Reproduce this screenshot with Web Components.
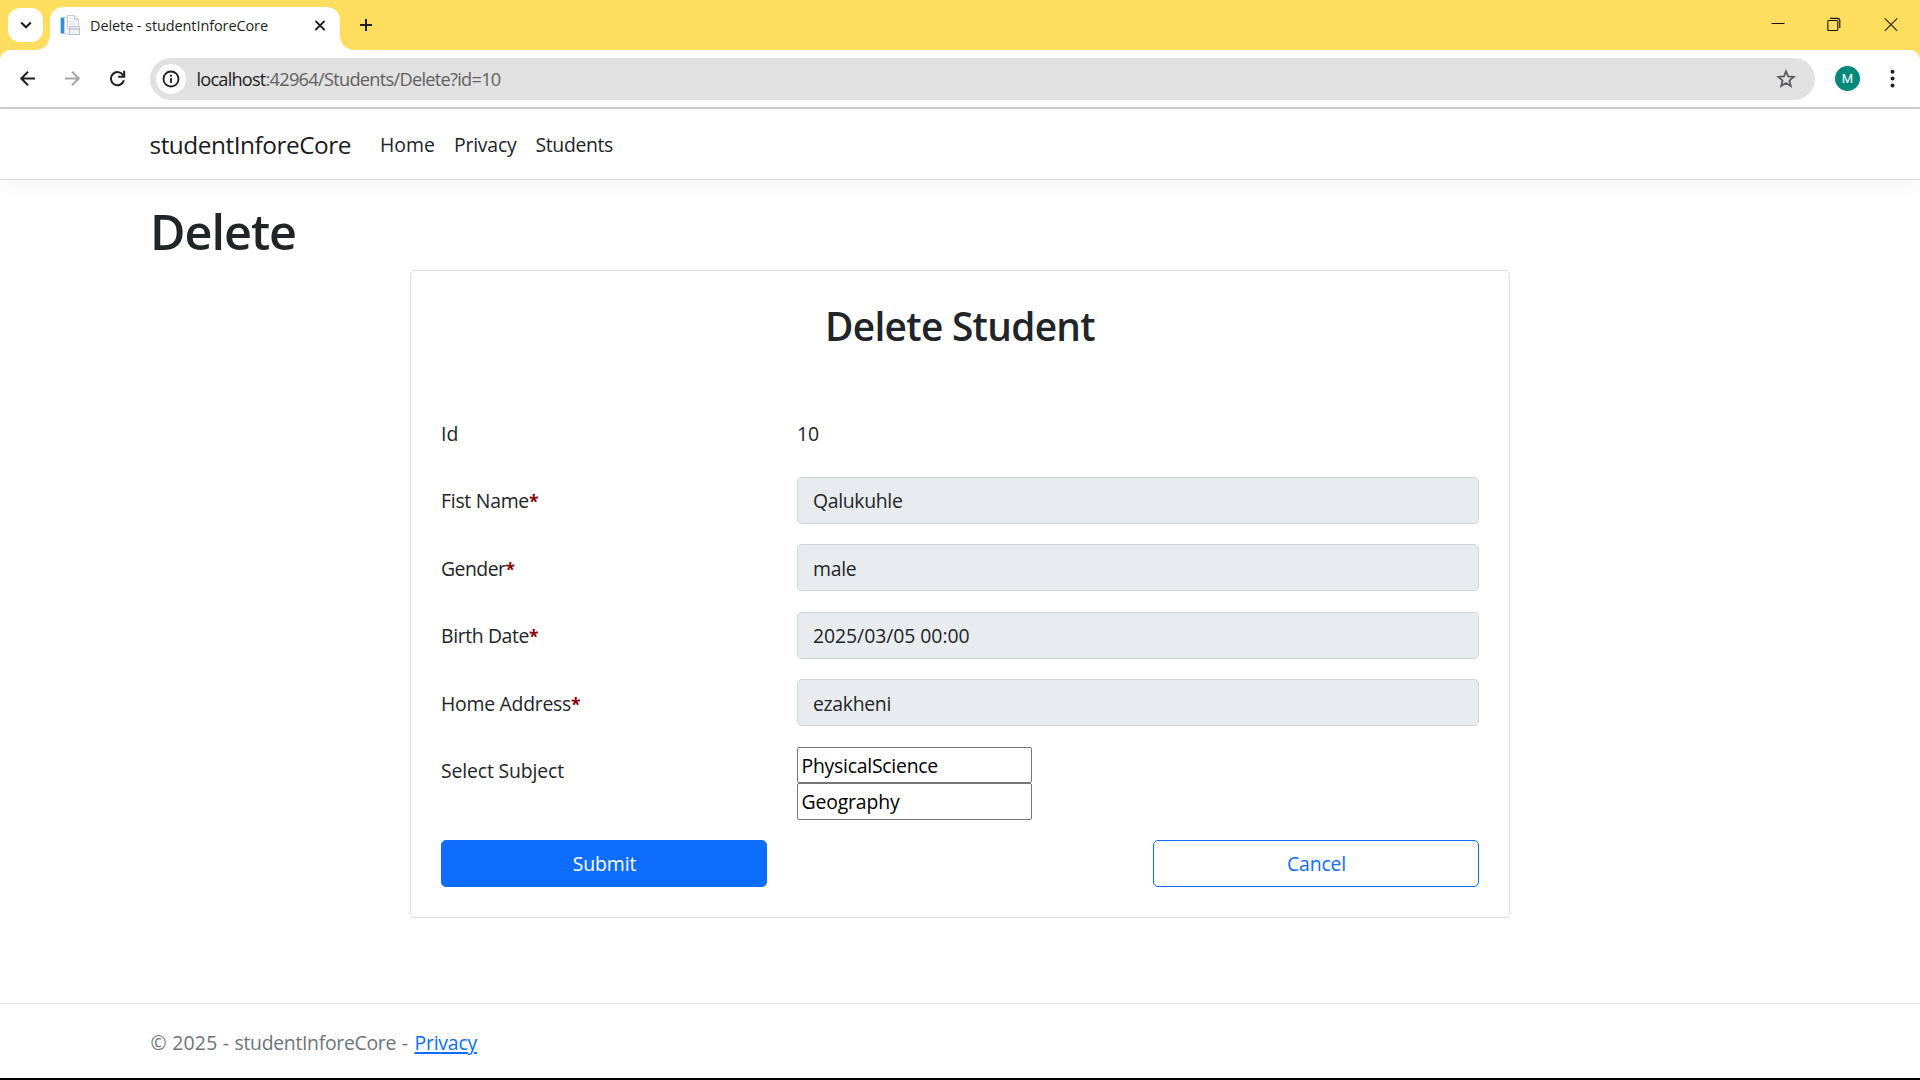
<!DOCTYPE html>
<html lang="en">
<head>
<meta charset="utf-8">
<title>Delete - studentInforeCore</title>
<style>
html,body{margin:0;height:100%;overflow:hidden;background:#fff}
body{font-family:"Open Sans","Noto Sans",sans-serif;font-size:19.4px;line-height:30px;color:#212529}
</style>
</head>
<body>
<browser-window></browser-window>
<script>
const define = (name, html, setup) => customElements.define(name, class extends HTMLElement {
  constructor() {
    super();
    this.attachShadow({mode: 'open'});
    const t = document.createElement('template');
    t.innerHTML = html;
    this.shadowRoot.append(t.content.cloneNode(true));
  }
  connectedCallback() { if (setup) setup.call(this, this.shadowRoot); }
});

// Text run tracked to an exact advance width.
define('fit-text', `<style>:host{display:inline-block;white-space:pre;flex:none}span{display:inline-block}</style><span><slot></slot></span>`, function (root) {
  const s = root.querySelector('span'), w = +this.getAttribute('w');
  s.style.letterSpacing = (w - s.getBoundingClientRect().width) / this.textContent.length + 'px';
  this.style.width = w + 'px';
});

define('tab-strip', `<style>
:host{display:flex;height:50px;background:#ffdd5e;align-items:flex-start}
.menu{width:35px;height:34px;margin:8px 7px 0 8px;border-radius:12px;background:#fff}
.tab{box-sizing:border-box;width:290px;height:43px;margin-top:7px;border-radius:13px 13px 0 0;background:#fff;display:flex;align-items:center;padding:0 12px 7px 10px;font-size:14.5px;line-height:20px;color:#1f1f1f;position:relative}
.tab::before,.tab::after{content:"";position:absolute;bottom:0;width:14px;height:14px}
.tab::before{left:-14px;background:radial-gradient(circle at 0 0,transparent 13.5px,#fff 14px)}
.tab::after{right:-14px;background:radial-gradient(circle at 100% 0,transparent 13.5px,#fff 14px)}
.tab fit-text{margin-left:10px;padding-top:2px}
.x{margin-left:auto}
.plus{margin:17px 0 0 18px}
.controls{margin-left:auto;display:flex;padding:17px 22px 0 0;gap:42px}
.close{margin-left:1.5px}
svg{display:block;flex:none}
</style>
<div class="menu"><svg width="35" height="34" viewBox="0 0 35 34" fill="none" stroke="#1f1f1f" stroke-width="2.2"><path d="M13.2 14.5L18 19.2L22.8 14.5"/></svg></div>
<div class="tab">
<svg width="20" height="21" viewBox="0 0 20 21"><rect x=".5" y="2.5" width="4" height="16" fill="#3292cf"/><path d="M.5 2v17" stroke="#b9d5e6"/><path d="M4.5 2.5h9l4 4V19h-13z" fill="#f7f8fa" stroke="#c9cdd3"/><path d="M7.5 .6h7l4 4v9h-11z" fill="#fafbfc" stroke="#c3c8cf"/><path d="M14.5 .6v4h4" fill="#e8ebef" stroke="#c3c8cf"/><path d="M9 4h4M9 6.5h7M9 9h7" stroke="#d6dde6"/><path d="M9.5 11.5h10v8h-10z" fill="#f0f2f6" stroke="#b9bfc8"/><path d="M10 14h9" stroke="#c6cdd8" stroke-width="2"/></svg>
<fit-text w="178">Delete - studentInforeCore</fit-text>
<svg class="x" width="16" height="16" viewBox="0 0 16 16" stroke="#1f1f1f" stroke-width="1.9"><path d="M3.4 3.8L12.6 13M12.6 3.8L3.4 13"/></svg>
</div>
<svg class="plus" width="16" height="16" viewBox="0 0 16 16" stroke="#1f1f1f" stroke-width="2"><path d="M8 2v12M2 8h12"/></svg>
<div class="controls">
<svg width="14" height="15" viewBox="0 0 14 15" stroke="#111"><path d="M.5 6.5H13.5"/></svg>
<svg width="14" height="15" viewBox="0 0 14 15" fill="none" stroke="#111" stroke-width="1.1"><rect x=".8" y="3.5" width="10" height="10" rx="1"/><path d="M3 1.4h7.5q2.3 0 2.3 2.3V11"/></svg>
<svg class="close" width="14" height="15" viewBox="0 0 14 15" stroke="#222" stroke-width="1.1"><path d="M.8 1.4L13.2 13.8M13.2 1.4L.8 13.8"/></svg>
</div>`);

define('tool-bar', `<style>
:host{display:block;height:57px;background:#ffdd5e;border-bottom:2px solid #ccc}
.bar{height:57px;background:#fff;border-radius:10px 10px 0 0;display:flex;box-sizing:border-box;padding-top:8px}
svg{display:block;flex:none}
.nav{display:flex;width:150px}
.url{width:1665px;height:42px;border-radius:21px;background:#e1e1e1;display:flex;align-items:center;box-sizing:border-box;padding:0 19.5px 0 6px;font-size:18.2px;line-height:26px;color:#5f6063}
.info{width:30px;height:30px;border-radius:50%;background:#fff;margin-right:10.5px}
.host{color:#1f1f1f}
.star{margin-left:auto}
.avatar{width:25px;height:25px;border-radius:50%;background:#00897b;color:#fff;font:13px/25px Roboto,sans-serif;text-align:center;margin:8px 0 0 20px}
.dots{margin:8px 0 0 27px}
</style>
<div class="bar">
<div class="nav"><svg width="150" height="42" viewBox="0 0 150 42" fill="none" stroke="#1f1f1f" stroke-width="2"><path d="M35 20.5H21.5M28 13.8L21.3 20.5L28 27.2"/><path d="M65 20.5H78.5M72 13.8L78.7 20.5L72 27.2" stroke="#a5a5a5"/><path d="M123.3 17.5A6.6 6.6 0 1 0 123.9 22.3"/><path d="M124.2 12.7V18.7H118.2" /></svg></div>
<div class="url">
<div class="info"><svg width="30" height="30" viewBox="0 0 30 30" fill="none" stroke="#1f1f1f" stroke-width="1.8"><circle cx="15" cy="15" r="7.5"/><path d="M15 14v5M15 10.7v2"/></svg></div>
<fit-text class="host" w="69">localhost</fit-text><fit-text w="235">:42964/Students/Delete?id=10</fit-text>
<svg class="star" width="20" height="20" viewBox="0 0 20 20" fill="none" stroke="#5a5b5e" stroke-width="1.8"><path d="M10 2.3L12.1 7.5L17.7 7.9L13.4 11.5L14.8 17L10 14L5.2 17L6.6 11.5L2.3 7.9L7.9 7.5Z"/></svg>
</div>
<div class="avatar">M</div>
<svg class="dots" width="12" height="26" viewBox="0 0 12 26" fill="#1f1f1f"><circle cx="5.5" cy="5.7" r="2"/><circle cx="5.5" cy="12.6" r="2"/><circle cx="5.5" cy="19.5" r="2"/></svg>
</div>`);

define('nav-bar', `<style>
:host{display:flex;height:70px;border-bottom:1px solid #dee2e6;box-shadow:0 5px 15px rgba(0,0,0,.05);box-sizing:content-box;padding-left:149.5px;align-items:flex-start;background:#fff}
.brand{font-size:24.4px;line-height:72px;margin-right:29px;color:#191b1e}
.link{margin-right:19px;line-height:71px}
</style>
<fit-text class="brand" w="201.5">studentInforeCore</fit-text>
<fit-text class="link" w="55">Home</fit-text>
<fit-text class="link" w="62.5">Privacy</fit-text>
<fit-text class="link" w="77.5">Students</fit-text>`);

define('form-row', `<style>
:host{display:grid;grid-template-columns:356px 682px;height:67.5px;align-items:start}
label{padding-top:9.5px;display:flex}
b{color:#8b0000;font-weight:700;font-size:17.5px}
</style><label><slot name="label"></slot><b></b></label><slot></slot>`, function (root) {
  if (this.hasAttribute('required')) root.querySelector('b').textContent = '*';
});

define('read-only', `<style>
:host{display:block;box-sizing:border-box;height:47px;border:1px solid #ced4da;border-radius:5px;background:#e9ecef;padding:8.5px 15px 0}
:host([plain]){border-color:transparent;background:none;padding-left:0;margin-left:-1px}
</style><slot></slot>`);

define('subject-box', `<style>
:host{display:block;box-sizing:border-box;width:235px;height:36.5px;border:1px solid #767676;border-radius:2px;padding:2.5px 3.5px;color:#000}
:host(:first-child){padding-top:3.4px}
</style><slot></slot>`);

define('form-button', `<style>
:host{display:block;box-sizing:border-box;width:326px;height:47px;border:1px solid #0d6efd;border-radius:5px;text-align:center;padding:8.5px 0 0 1px;color:#0d6efd}
:host([primary]){background:#0d6efd;color:#fff}
</style><slot></slot>`);

define('delete-card', `<style>
:host{display:block;box-sizing:border-box;width:1100px;height:648px;margin-left:410px;border:1px solid #dbdddf;border-radius:5px;padding:0 30px}
h2{margin:0;height:138.4px;padding-top:31px;box-sizing:border-box;font-size:38.8px;line-height:48px;font-weight:600;text-align:center}
.buttons{display:flex;justify-content:space-between}
.subjects{margin-top:-.4px}
form-row.last{height:93.1px}
</style>
<h2><fit-text w="270">Delete Student</fit-text></h2>
<form-row><fit-text slot="label" w="17.5">Id</fit-text><read-only plain><fit-text w="22">10</fit-text></read-only></form-row>
<form-row required><fit-text slot="label" w="88">Fist Name</fit-text><read-only><fit-text w="89.5">Qalukuhle</fit-text></read-only></form-row>
<form-row required><fit-text slot="label" w="64.5">Gender</fit-text><read-only><fit-text w="43.5">male</fit-text></read-only></form-row>
<form-row required><fit-text slot="label" w="88">Birth Date</fit-text><read-only><fit-text w="156.5">2025/03/05 00:00</fit-text></read-only></form-row>
<form-row required><fit-text slot="label" w="130">Home Address</fit-text><read-only><fit-text w="78">ezakheni</fit-text></read-only></form-row>
<form-row class="last"><fit-text slot="label" w="123">Select Subject</fit-text><div class="subjects"><subject-box><fit-text w="136.5">PhysicalScience</fit-text></subject-box><subject-box><fit-text w="98">Geography</fit-text></subject-box></div></form-row>
<div class="buttons"><form-button primary><fit-text w="63.5">Submit</fit-text></form-button><form-button><fit-text w="59">Cancel</fit-text></form-button></div>`);

define('page-footer', `<style>
:host{display:block;box-sizing:border-box;height:75px;border-top:1px solid #dee2e6;padding:23.5px 0 0 150.5px;color:#6c757d}
.row{display:flex}
a{color:#0d6efd}
u{text-decoration-thickness:2px;text-underline-offset:2px}
</style><div class="row"><fit-text w="84">© 2025 - </fit-text><fit-text w="161.5">studentInforeCore</fit-text><fit-text w="18.5"> - </fit-text><a><fit-text w="62.5"><u>Privacy</u></fit-text></a></div>`);

define('browser-window', `<style>
:host{display:flex;flex-direction:column;width:1920px;height:1080px;box-sizing:border-box;border-bottom:2px solid #000;background:#fff}
h1{margin:0;height:90px;box-sizing:border-box;padding:20px 0 0 150px;font-size:48.5px;line-height:62px;font-weight:600}
page-footer{margin-top:auto}
</style>
<tab-strip></tab-strip><tool-bar></tool-bar><nav-bar></nav-bar>
<h1><fit-text w="146">Delete</fit-text></h1>
<delete-card></delete-card><page-footer></page-footer>`);
</script>
</body>
</html>
